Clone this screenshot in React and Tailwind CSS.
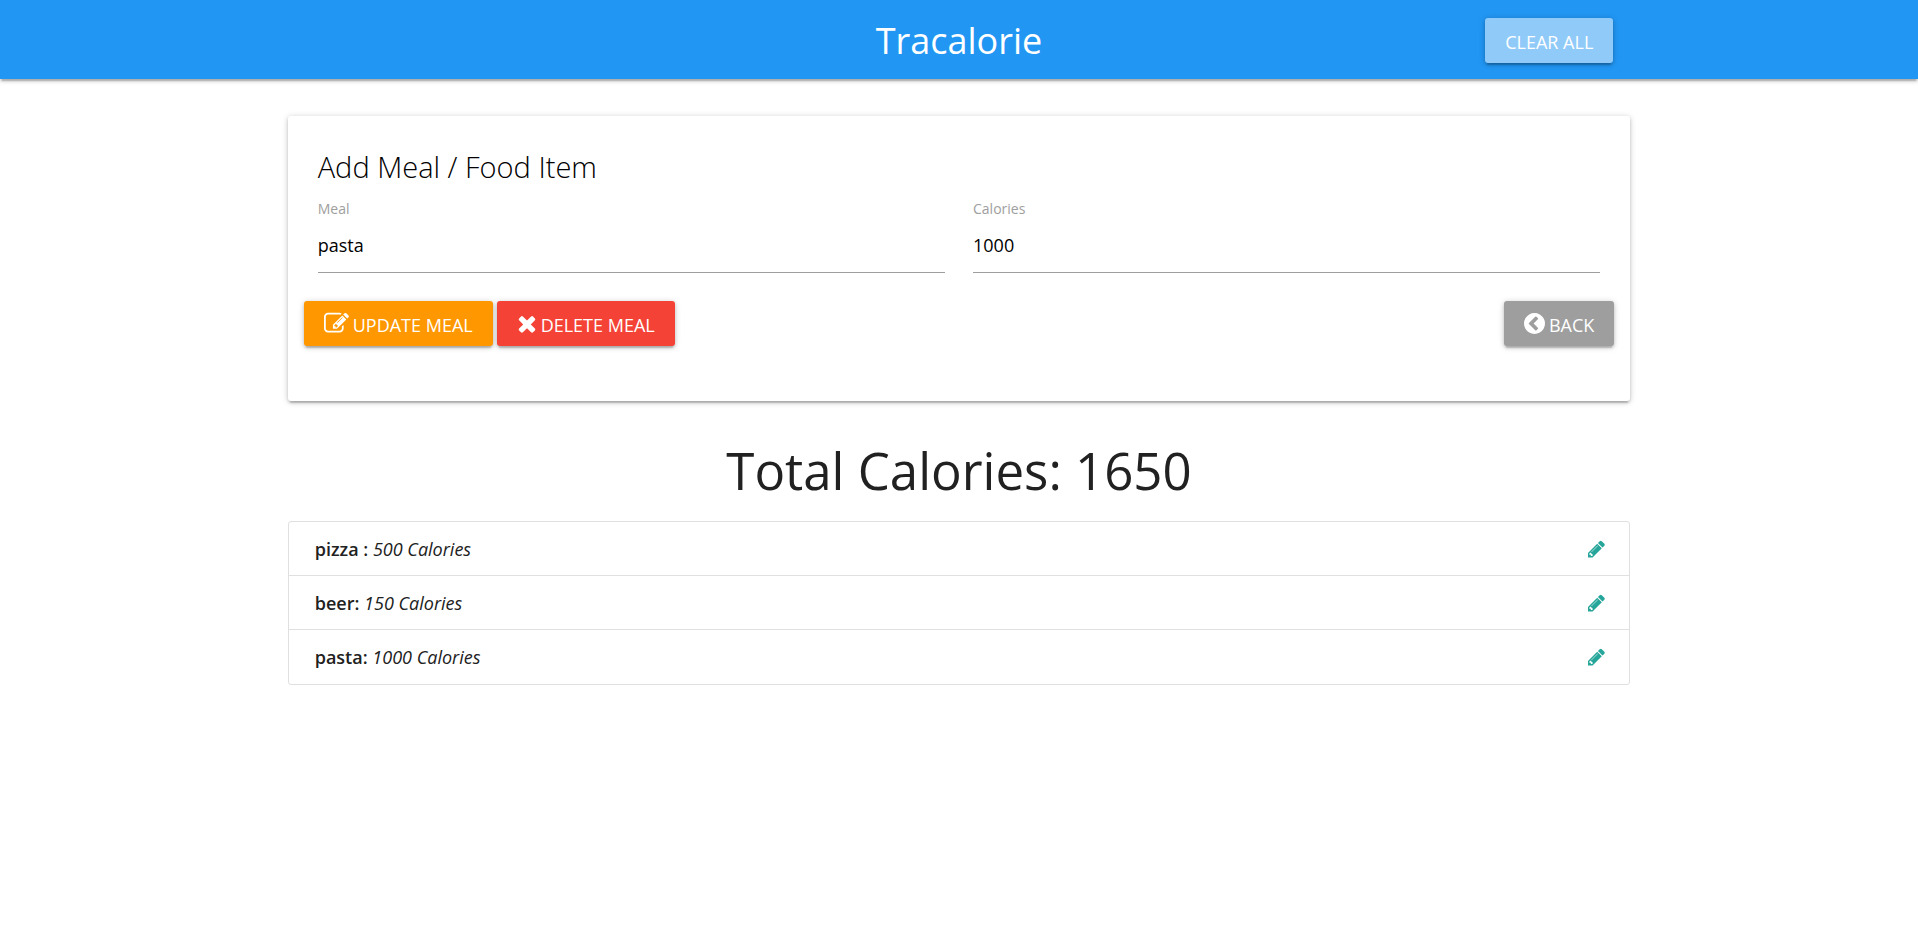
import { useState } from 'react';

const ICONS = {
  edit: {
    box: '0 0 1792 1792',
    d: 'M888 1184l116-116-152-152-116 116v56h96v96h56zm440-720q-16-16-33 1l-350 350q-17 17-1 33t33-1l350-350q17-17 1-33zm80 594v190q0 119-84.5 203.5t-203.5 84.5h-832q-119 0-203.5-84.5t-84.5-203.5v-832q0-119 84.5-203.5t203.5-84.5h832q63 0 117 25 15 7 18 23 3 17-9 29l-49 49q-14 14-32 8-23-6-45-6h-832q-66 0-113 47t-47 113v832q0 66 47 113t113 47h832q66 0 113-47t47-113v-126q0-13 9-22l64-64q15-15 35-7t20 29zm-96-738l288 288-672 672h-288v-288zm444 132l-92 92-288-288 92-92q28-28 68-28t68 28l152 152q28 28 28 68t-28 68z',
  },
  times: {
    box: '192 0 1408 1792',
    d: 'M1490 1322q0 40-28 68l-136 136q-28 28-68 28t-68-28l-294-294-294 294q-28 28-68 28t-68-28l-136-136q-28-28-28-68t28-68l294-294-294-294q-28-28-28-68t28-68l136-136q28-28 68-28t68 28l294 294 294-294q28-28 68-28t68 28l136 136q28 28 28 68t-28 68l-294 294 294 294q28 28 28 68z',
  },
  back: {
    box: '128 0 1536 1792',
    d: 'M1037 1395l102-102q19-19 19-45t-19-45l-307-307 307-307q19-19 19-45t-19-45l-102-102q-19-19-45-19t-45 19l-454 454q-19 19-19 45t19 45l454 454q19 19 45 19t45-19zm627-499q0 209-103 385.5t-279.5 279.5-385.5 103-385.5-103-279.5-279.5-103-385.5 103-385.5 279.5-279.5 385.5-103 385.5 103 279.5 279.5 103 385.5z',
  },
  pencil: {
    box: '128 0 1536 1792',
    d: 'M491 1536l91-91-235-235-91 91v107h128v128h107zm523-928q0-22-22-22-10 0-17 7l-542 542q-7 7-7 17 0 22 22 22 10 0 17-7l542-542q7-7 7-17zm-54-192l416 416-832 832h-416v-416zm683 96q0 53-37 90l-166 166-416-416 166-165q36-38 90-38 53 0 91 38l235 234q37 39 37 91z',
  },
};

function Icon({ name, className }) {
  const { box, d } = ICONS[name];
  return (
    <svg viewBox={box} className={className} fill="currentColor" aria-hidden="true">
      <path d={d} />
    </svg>
  );
}

const SHADOW =
  'shadow-[0_2px_3px_0_rgba(0,0,0,0.14),0_4px_1px_-2px_rgba(0,0,0,0.12),0_1px_6px_0_rgba(0,0,0,0.2)]';

function Button({ color, icon, iconClass, children }) {
  return (
    <button
      type="button"
      className={`flex h-[45px] items-center rounded-[3px] px-5 text-lg text-white uppercase ${SHADOW} ${color}`}
    >
      {icon && <Icon name={icon} className={iconClass} />}
      <span className="pt-0.5">{children}</span>
    </button>
  );
}

function Field({ id, label, value, onChange, ...rest }) {
  return (
    <div className="flex flex-1 flex-col">
      <label htmlFor={id} className="text-sm leading-5 text-[#9e9e9e]">
        {label}
      </label>
      <input
        id={id}
        value={value}
        onChange={(e) => onChange(e.target.value)}
        className="h-[54px] w-full border-b border-[#9e9e9e] bg-transparent pb-0.5 text-lg text-black outline-none"
        {...rest}
      />
    </div>
  );
}

const MEALS = [
  { id: 0, name: 'pizza :', calories: 500 },
  { id: 1, name: 'beer:', calories: 150 },
  { id: 2, name: 'pasta:', calories: 1000 },
];

export default function App() {
  const [meal, setMeal] = useState('pasta');
  const [calories, setCalories] = useState('1000');
  const total = MEALS.reduce((sum, m) => sum + m.calories, 0);

  return (
    <div className="min-h-screen bg-white font-['Open_Sans','Noto_Sans',sans-serif] text-[#212121]">
      <nav className={`bg-[#2196f3] ${SHADOW}`}>
        <div className="mx-auto grid h-[79px] w-[70%] grid-cols-[1fr_auto_1fr] items-center">
          <a href="#" className="col-start-2 pt-0.5 text-4xl text-white">
            Tracalorie
          </a>
          <div className="flex justify-end pt-0.5 pr-[17px]">
            <Button color="bg-[#90caf9]">Clear All</Button>
          </div>
        </div>
      </nav>

      <main className="mx-auto w-[70%] pt-[37px]">
        <section className={`rounded-[3px] bg-white px-4 pt-[31px] pb-[55px] ${SHADOW}`}>
          <h2 className="px-3.5 text-[29px] leading-10 font-light text-black">
            Add Meal / Food Item
          </h2>
          <form>
            <div className="flex gap-7 px-3.5 pt-3">
              <Field id="item-name" label="Meal" value={meal} onChange={setMeal} />
              <Field
                id="item-calories"
                label="Calories"
                value={calories}
                onChange={setCalories}
                inputMode="numeric"
              />
            </div>
            <div className="flex gap-1 pt-7">
              <Button color="bg-[#ff9800]" icon="edit" iconClass="mr-1 size-[25px]">
                Update Meal
              </Button>
              <Button color="bg-[#f44336]" icon="times" iconClass="mr-1 h-[25px] w-5">
                Delete Meal
              </Button>
              <div className="ml-auto">
                <Button color="bg-[#9e9e9e]" icon="back" iconClass="mr-1 h-[25px] w-[21px]">
                  Back
                </Button>
              </div>
            </div>
          </form>
        </section>

        <h3 className="pt-9 text-center text-[51px] leading-[66px]">Total Calories: {total}</h3>

        <ul className="mt-[18px] rounded-[3px] border border-[#e0e0e0]">
          {MEALS.map((m) => (
            <li
              key={m.id}
              className="flex h-[54px] items-center justify-between border-b border-[#e0e0e0] pr-6 pl-[26px] text-lg last:border-b-0"
            >
              <span>
                <strong className="font-semibold">{m.name}</strong>{' '}
                <em>{m.calories} Calories</em>
              </span>
              <a href="#" aria-label="Edit meal" className="text-[#26a69a]">
                <Icon name="pencil" className="h-5 w-[17px]" />
              </a>
            </li>
          ))}
        </ul>
      </main>
    </div>
  );
}
